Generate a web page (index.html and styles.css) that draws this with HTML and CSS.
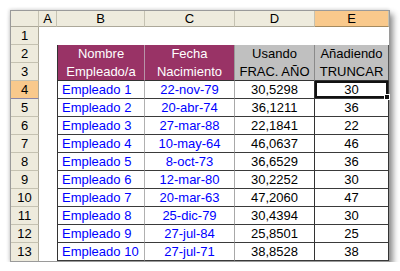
FILE: index.html
```html
<!DOCTYPE html>
<html lang="es">
<head>
<meta charset="utf-8">
<title>Hoja</title>
<link rel="stylesheet" href="styles.css">
</head>
<body>
<div class="page">
  <div class="sheet">
    <div class="ch corner"></div>
    <div class="ch">A</div>
    <div class="ch">B</div>
    <div class="ch">C</div>
    <div class="ch">D</div>
    <div class="ch sel">E</div>

    <div class="rh">1</div>
    <div class="empty wide"></div>

    <div class="rh">2</div>
    <div class="empty"></div>
    <div class="hp span2 b-hdr">Nombre<br>Empleado/a</div>
    <div class="hp span2 c-hdr">Fecha<br>Nacimiento</div>
    <div class="hg span2 d-hdr">Usando<br>FRAC. AÑO</div>
    <div class="hg span2 e-hdr">Añadiendo<br>TRUNCAR</div>

    <div class="rh">3</div>
    <div class="empty"></div>

    <div class="rh sel">4</div><div class="empty"></div><div class="cb">Empleado 1</div><div class="cc">22-nov-79</div><div class="cd">30,5298</div><div class="ce active">30</div>
    <div class="rh">5</div><div class="empty"></div><div class="cb">Empleado 2</div><div class="cc">20-abr-74</div><div class="cd">36,1211</div><div class="ce">36</div>
    <div class="rh">6</div><div class="empty"></div><div class="cb">Empleado 3</div><div class="cc">27-mar-88</div><div class="cd">22,1841</div><div class="ce">22</div>
    <div class="rh">7</div><div class="empty"></div><div class="cb">Empleado 4</div><div class="cc">10-may-64</div><div class="cd">46,0637</div><div class="ce">46</div>
    <div class="rh">8</div><div class="empty"></div><div class="cb">Empleado 5</div><div class="cc">8-oct-73</div><div class="cd">36,6529</div><div class="ce">36</div>
    <div class="rh">9</div><div class="empty"></div><div class="cb">Empleado 6</div><div class="cc">12-mar-80</div><div class="cd">30,2252</div><div class="ce">30</div>
    <div class="rh">10</div><div class="empty"></div><div class="cb">Empleado 7</div><div class="cc">20-mar-63</div><div class="cd">47,2060</div><div class="ce">47</div>
    <div class="rh">11</div><div class="empty"></div><div class="cb">Empleado 8</div><div class="cc">25-dic-79</div><div class="cd">30,4394</div><div class="ce">30</div>
    <div class="rh">12</div><div class="empty"></div><div class="cb">Empleado 9</div><div class="cc">27-jul-84</div><div class="cd">25,8501</div><div class="ce">25</div>
    <div class="rh last">13</div><div class="empty"></div><div class="cb">Empleado 10</div><div class="cc">27-jul-71</div><div class="cd">38,8528</div><div class="ce">38</div>
  </div>
</div>
</body>
</html>
```

FILE: styles.css
```css
* { box-sizing: border-box; }
html, body { margin: 0; padding: 0; background: #ffffff; }
body {
  font-family: "Liberation Sans", Arial, sans-serif;
  font-size: 13px;
  color: #000;
}
.page {
  padding: 10px 0 0 10px;
}
.sheet {
  width: 380px;
  display: grid;
  grid-template-columns: 28px 18px 88px 90px 80px 74px;
  grid-template-rows: 16px repeat(13, 18px);
  border: 1px solid #9a9a9a;
  background: #fff;
  box-shadow: 3px 4px 6px rgba(0,0,0,0.45), -1px -1px 3px rgba(0,0,0,0.12);
}
.ch {
  background: #eeebdd;
  border-right: 1px solid #c5c2b2;
  border-bottom: 1px solid #aca899;
  text-align: center;
  line-height: 15px;
}
.ch:last-child { border-right: none; }
.ch.sel {
  background: #f9c98c;
  border-bottom-color: #a58a5f;
}
.rh {
  background: #eeebdd;
  border-right: 1px solid #aca899;
  border-bottom: 1px solid #c5c2b2;
  text-align: center;
  line-height: 17px;
}
.rh.sel {
  background: #f9c98c;
  border-bottom: 1px solid #8a86a8;
}
.rh.last { border-bottom: none; }
.empty { background: #fff; }
.wide { grid-column: 2 / 7; }
.span2 { grid-row: span 2; }
.hp {
  background: #993366;
  color: #ffffff;
  text-align: center;
  line-height: 18px;
  border-bottom: 1px solid #333;
}
.b-hdr { border-left: 1px solid #333; border-right: 1px solid #b894a8; }
.c-hdr { border-right: 1px solid #999; }
.hg {
  background: #c0c0c0;
  color: #000;
  text-align: center;
  line-height: 18px;
  border-bottom: 1px solid #333;
}
.d-hdr { border-right: 1px solid #8a8a8a; }
.e-hdr { border-right: 1px solid #555; }
.cb, .cc, .cd, .ce {
  line-height: 17px;
  border-bottom: 1px solid #3a3a3a;
  white-space: nowrap;
}
.cb {
  color: #0000ff;
  padding-left: 4px;
  border-left: 1px solid #333;
  border-right: 1px solid #b0b0b0;
}
.cc {
  color: #0000ff;
  text-align: center;
  border-right: 1px solid #a8a8a8;
}
.cd {
  text-align: center;
  border-right: 1px solid #333;
}
.ce {
  text-align: center;
  border-right: 1px solid #333;
}
.ce.active {
  position: relative;
  box-shadow: inset 0 0 0 2px #111;
}
.ce.active::after {
  content: "";
  position: absolute;
  right: -2px;
  bottom: -2px;
  width: 4px;
  height: 4px;
  background: #111;
  border: 1px solid #fff;
}
```
